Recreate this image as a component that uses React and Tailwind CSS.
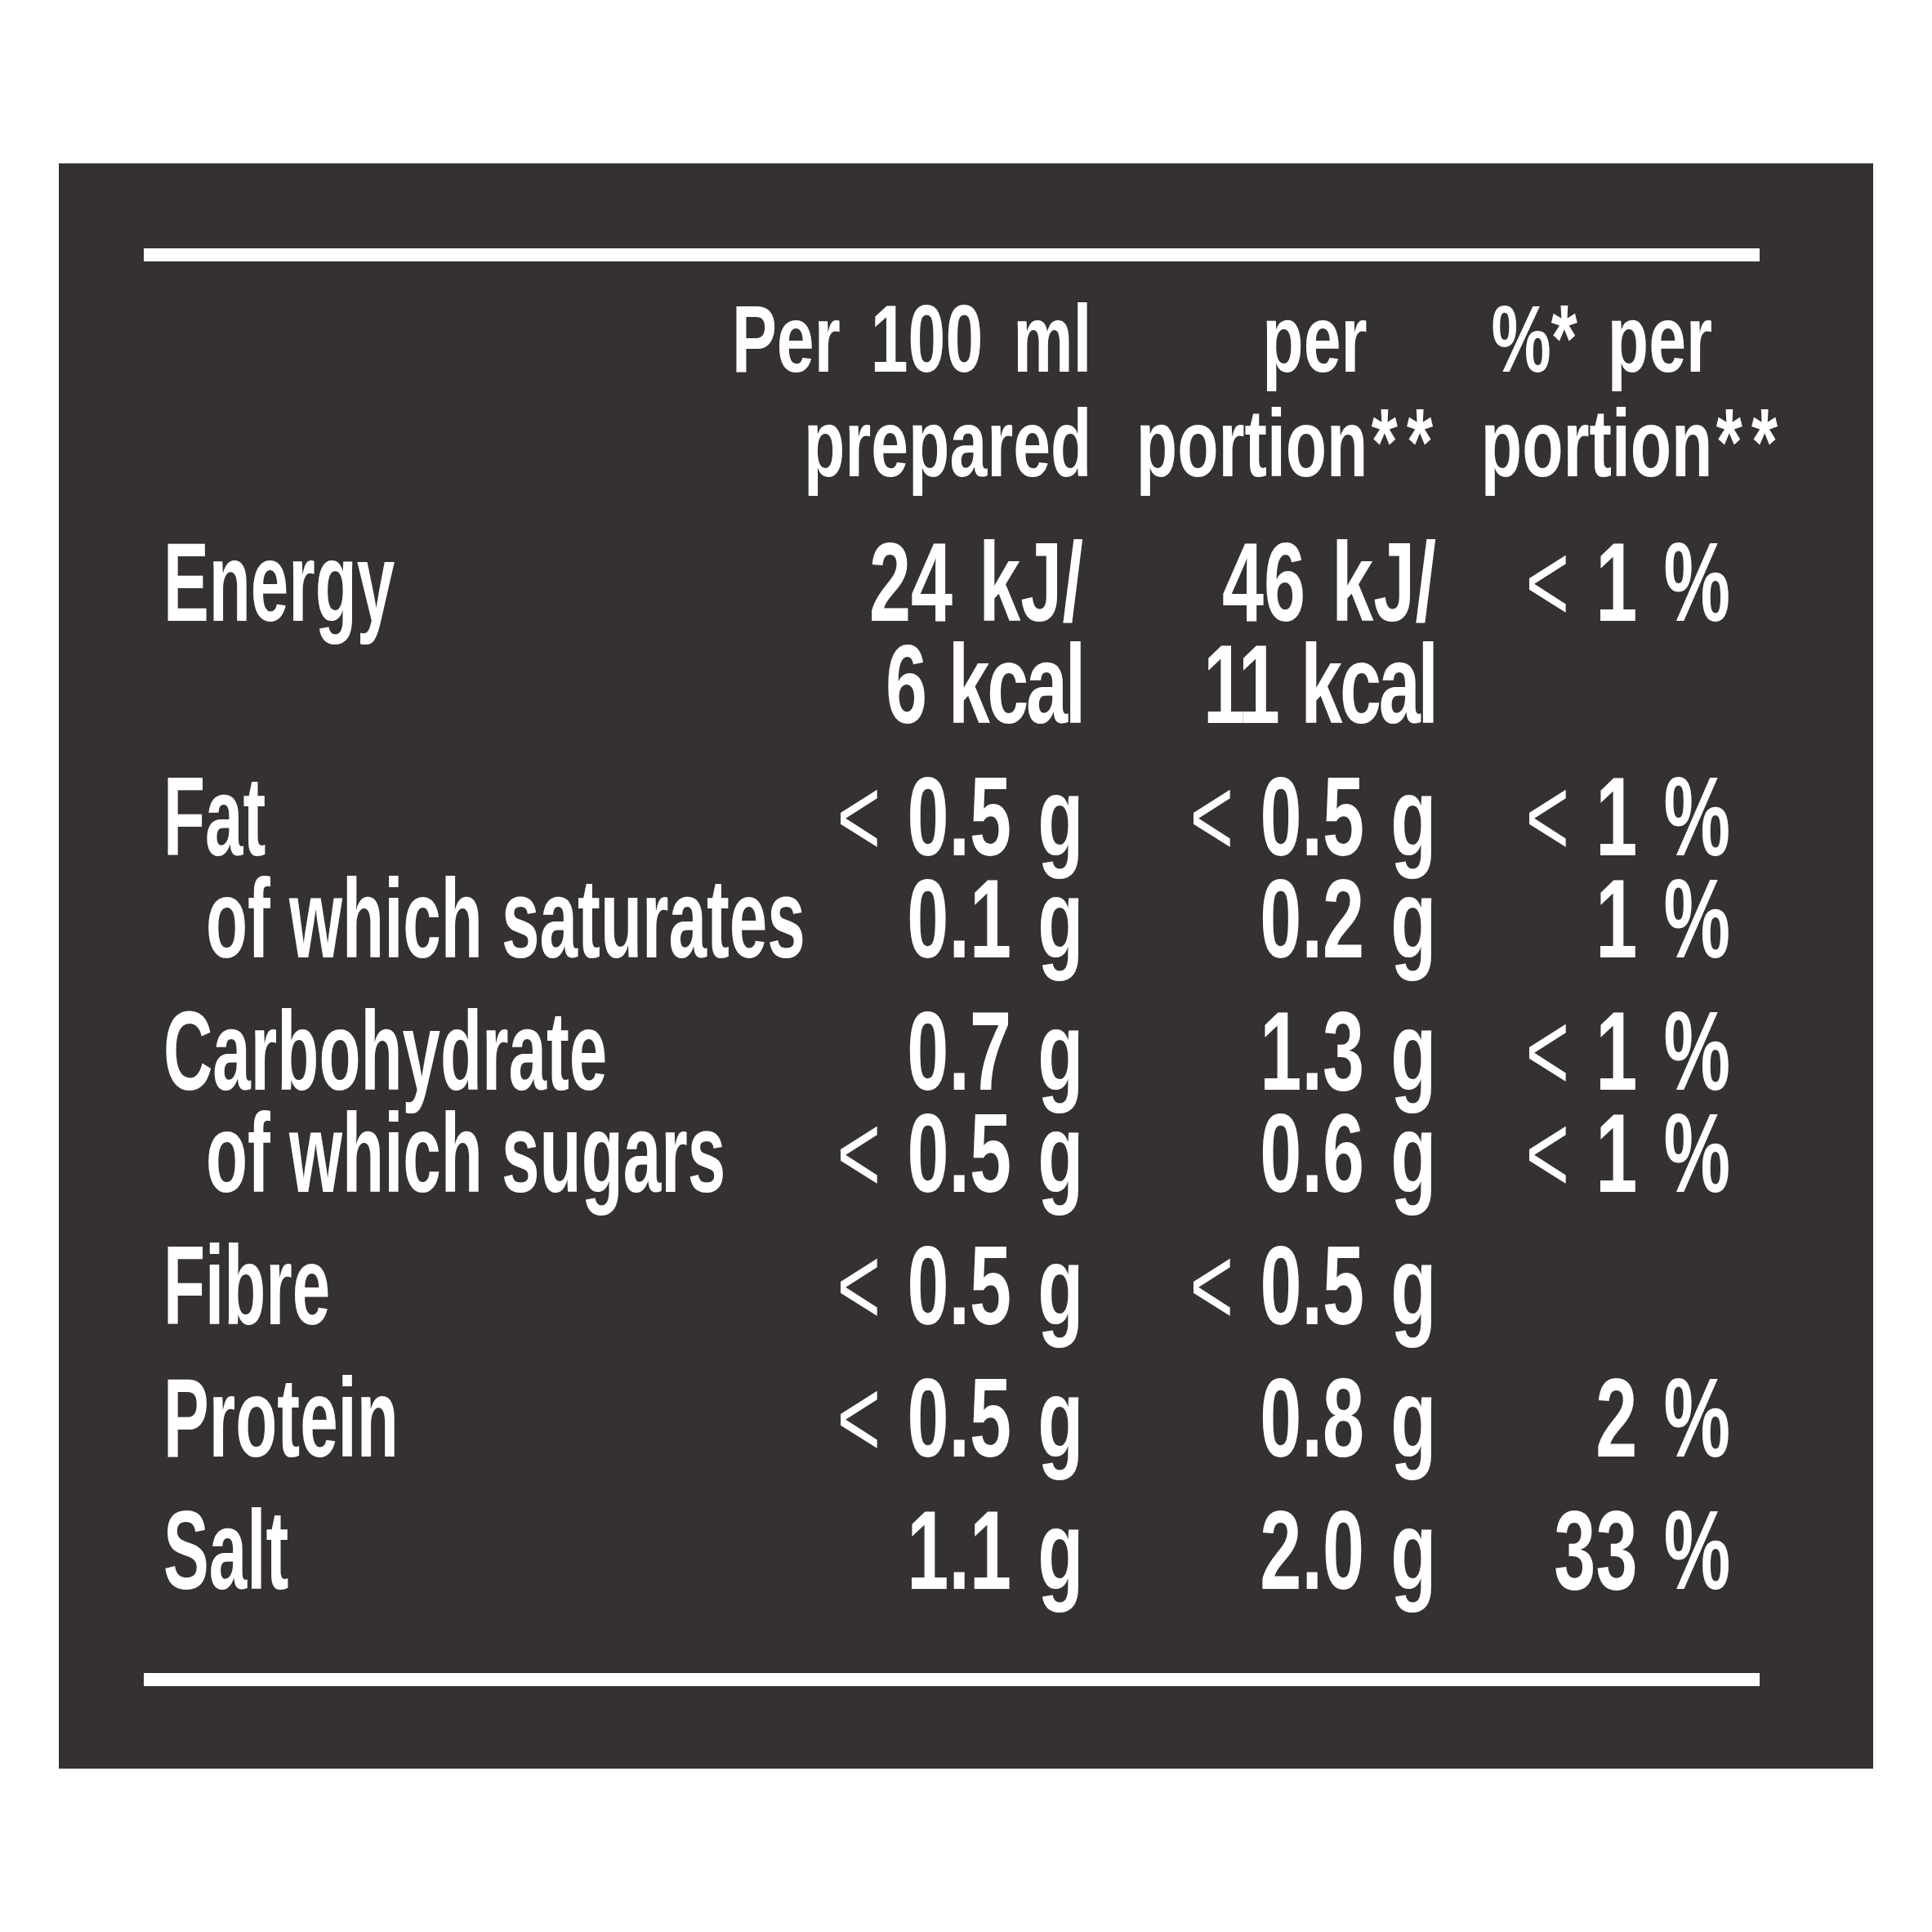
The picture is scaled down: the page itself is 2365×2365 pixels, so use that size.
import React from 'react';

const COLS = 'grid grid-cols-[824px_326px_432px_360px]';

const groups = [
  [{ label: 'Energy', values: [['24 kJ/', '6 kcal'], ['46 kJ/', '11 kcal'], ['< 1 %']] }],
  [
    { label: 'Fat', values: [['< 0.5 g'], ['< 0.5 g'], ['< 1 %']] },
    { label: 'of which saturates', sub: true, values: [['0.1 g'], ['0.2 g'], ['1 %']] },
  ],
  [
    { label: 'Carbohydrate', values: [['0.7 g'], ['1.3 g'], ['< 1 %']] },
    { label: 'of which sugars', sub: true, values: [['< 0.5 g'], ['0.6 g'], ['< 1 %']] },
  ],
  [{ label: 'Fibre', values: [['< 0.5 g'], ['< 0.5 g'], []] }],
  [{ label: 'Protein', values: [['< 0.5 g'], ['0.8 g'], ['2 %']] }],
  [{ label: 'Salt', values: [['1.1 g'], ['2.0 g'], ['33 %']] }],
];

// the "<" sign in the print is a thin stroke
const Value = ({ text }) =>
  text.startsWith('<') ? (
    <>
      <span className="font-normal">{'<'}</span>
      {text.slice(1)}
    </>
  ) : (
    text
  );

const Stars = ({ children }) => (
  <span className="relative">
    {children}
    <span className="absolute left-full top-0 pl-[6px] tracking-[16px]">**</span>
  </span>
);

const Header = () => (
  <div className={`${COLS} mt-[31px] text-[116px] leading-[128px] [word-spacing:20px]`}>
    <div />
    <div className="flex flex-col items-end -mr-[10px]">
      <span className="inline-block whitespace-pre origin-right scale-x-[0.71]">Per 100 ml</span>
      <span className="inline-block whitespace-pre origin-right scale-x-[0.71]">prepared</span>
    </div>
    <div className="flex flex-col items-end pr-[84px]">
      <span className="inline-block whitespace-pre origin-right scale-x-[0.71]">per</span>
      <span className="inline-block whitespace-pre origin-right scale-x-[0.71]">
        <Stars>portion</Stars>
      </span>
    </div>
    <div className="flex flex-col items-end pr-[22px]">
      <span className="inline-block whitespace-pre origin-right scale-x-[0.71]">%* per</span>
      <span className="inline-block whitespace-pre origin-right scale-x-[0.71]">
        <Stars>portion</Stars>
      </span>
    </div>
  </div>
);

const Row = ({ row }) => (
  <div className={COLS}>
    <div className={row.sub ? 'pl-[76px]' : 'pl-[24px]'}>
      <span className="inline-block whitespace-pre origin-left scale-x-[0.61]">{row.label}</span>
    </div>
    {row.values.map((lines, i) => (
      <div key={i} className="flex flex-col items-end [word-spacing:10px]">
        {lines.map((line) => (
          <span
            key={line}
            className={`inline-block whitespace-pre origin-right scale-x-[0.67] ${
              line.endsWith('kcal') ? 'tracking-[-5px]' : ''
            }`}
          >
            <Value text={line} />
          </span>
        ))}
      </div>
    ))}
  </div>
);

export default function App() {
  return (
    <div className="w-[2365px] h-[2365px] bg-white pl-[72px] pt-[200px] font-['Liberation_Sans',Arial,sans-serif] font-bold text-white">
      <div className="w-[2221px] h-[1965px] bg-[#353132] pl-[104px] pt-[104px]">
        <div className="w-[1978px] h-[16px] bg-white" />
        <Header />
        <div className="mt-[43px] flex flex-col gap-[37px] text-[137px] leading-[125px]">
          {groups.map((group, g) => (
            <div key={g} className="flex flex-col">
              {group.map((row) => (
                <Row key={row.label} row={row} />
              ))}
            </div>
          ))}
        </div>
        <div className="mt-[88px] w-[1978px] h-[16px] bg-white" />
      </div>
    </div>
  );
}
